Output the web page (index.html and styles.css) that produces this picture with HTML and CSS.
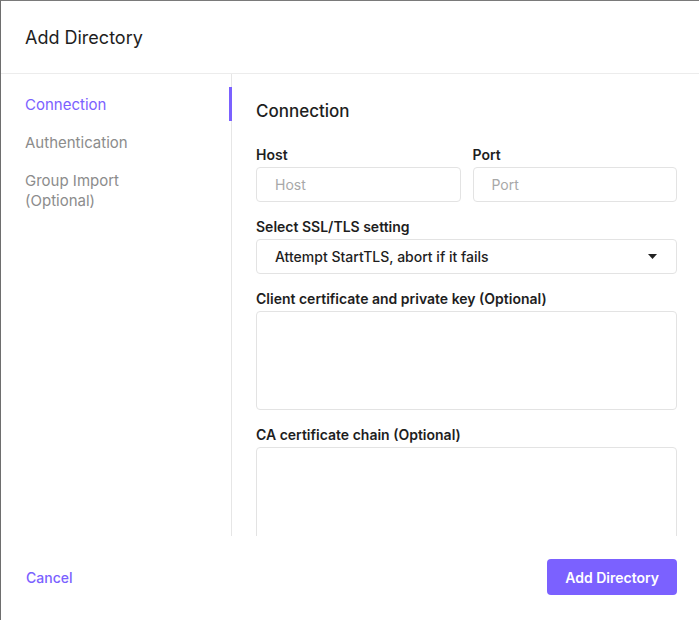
FILE: index.html
```html
<!DOCTYPE html>
<html>
<head>
<meta charset="utf-8">
<link rel="stylesheet" href="styles.css">
</head>
<body>
<div class="modal">
  <header class="modal-header"><h1 class="title">Add Directory</h1></header>
  <div class="modal-body">
    <nav class="sidebar">
      <div class="nav-item active"><span>Connection</span></div>
      <div class="nav-item"><span>Authentication</span></div>
      <div class="nav-item"><span>Group Import (Optional)</span></div>
    </nav>
    <section class="content">
      <h2 class="section-title">Connection</h2>
      <div class="row">
        <div class="field">
          <label class="label">Host</label>
          <input class="input" placeholder="Host">
        </div>
        <div class="field">
          <label class="label">Port</label>
          <input class="input" placeholder="Port">
        </div>
      </div>
      <div class="field">
        <label class="label">Select SSL/TLS setting</label>
        <div class="select">
          <span>Attempt StartTLS, abort if it fails</span>
          <svg class="caret" width="9" height="5" viewBox="0 0 9 5"><path d="M0 0h9L4.5 5z" fill="#222"/></svg>
        </div>
      </div>
      <div class="field">
        <label class="label">Client certificate and private key (Optional)</label>
        <textarea class="textarea"></textarea>
      </div>
      <div class="field">
        <label class="label">CA certificate chain (Optional)</label>
        <textarea class="textarea"></textarea>
      </div>
    </section>
  </div>
  <footer class="modal-footer">
    <a class="cancel">Cancel</a>
    <button class="primary">Add Directory</button>
  </footer>
</div>
</body>
</html>
```
FILE: styles.css
```css
* { box-sizing: border-box; }
html, body { margin: 0; padding: 0; background: #fff; }
body { font-family: Inter, "Noto Sans", sans-serif; color: #1e1e1e; }
.modal {
  width: 699px; height: 620px;
  border-top: 1px solid #7a7a7a;
  border-left: 1px solid #6e6e6e;
  display: flex; flex-direction: column;
  background: #fff;
}
.modal-header {
  height: 73px; flex: none;
  border-bottom: 1px solid #ececec;
  display: flex; align-items: center;
  padding-left: 24px; padding-top: 1px;
}
.title { margin: 0; font-size: 18px; font-weight: 400; line-height: 24px; color: #1e1e1e; }
.modal-body { display: flex; height: 462px; flex: none; overflow: hidden; }
.sidebar {
  width: 231px; flex: none;
  border-right: 1px solid #e6e6e6;
  padding-top: 13px;
  display: flex; flex-direction: column; gap: 4px;
}
.nav-item {
  position: relative;
  padding: 8px 24px 6px;
  font-size: 15px; line-height: 20px;
  color: #8c8c8c;
}
.nav-item span { display: block; max-width: 130px; }
.nav-item.active { color: #7b61ff; }
.nav-item.active::after {
  content: ""; position: absolute;
  right: -1px; top: 0; bottom: 0; width: 3px;
  background: #7b61ff;
}
.content { flex: 1; padding: 25px 22px 0 24px; overflow: hidden; }
.section-title { margin: 0 0 22px; font-size: 17px; font-weight: 500; line-height: 24px; color: #1e1e1e; }
.row { display: grid; grid-template-columns: 1fr 1fr; gap: 12px; }
.field { display: flex; flex-direction: column; margin-bottom: 15px; min-width: 0; }
.label { font-size: 14px; font-weight: 600; line-height: 20px; margin-bottom: 2px; color: #1e1e1e; }
.input {
  width: 100%; min-width: 0;
  height: 35px; border: 1px solid #e3e3e3; border-radius: 4px;
  padding: 0 18px; font: 14px Inter, sans-serif; color: #1e1e1e; outline: none;
}
.input::placeholder { color: #a8a8a8; }
.select {
  height: 35px; border: 1px solid #e3e3e3; border-radius: 4px;
  padding: 0 19px 0 18px; display: flex; align-items: center; justify-content: space-between;
  font-size: 14px; font-weight: 500; color: #1e1e1e;
}
.caret { display: block; margin-top: 0; }
.textarea {
  height: 99px; border: 1px solid #e3e3e3; border-radius: 4px;
  resize: none; outline: none; font: 14px Inter, sans-serif;
}
.modal-footer {
  flex: 1;
  display: flex; align-items: center; justify-content: space-between;
  padding: 0 22px 2px 25px;
}
.cancel { color: #7b61ff; font-size: 14px; font-weight: 500; cursor: pointer; }
.primary {
  height: 36px; padding: 0 18px;
  background: #7b61ff; color: #fff; border: none; border-radius: 4px;
  font: 600 14px Inter, sans-serif;
}
```
